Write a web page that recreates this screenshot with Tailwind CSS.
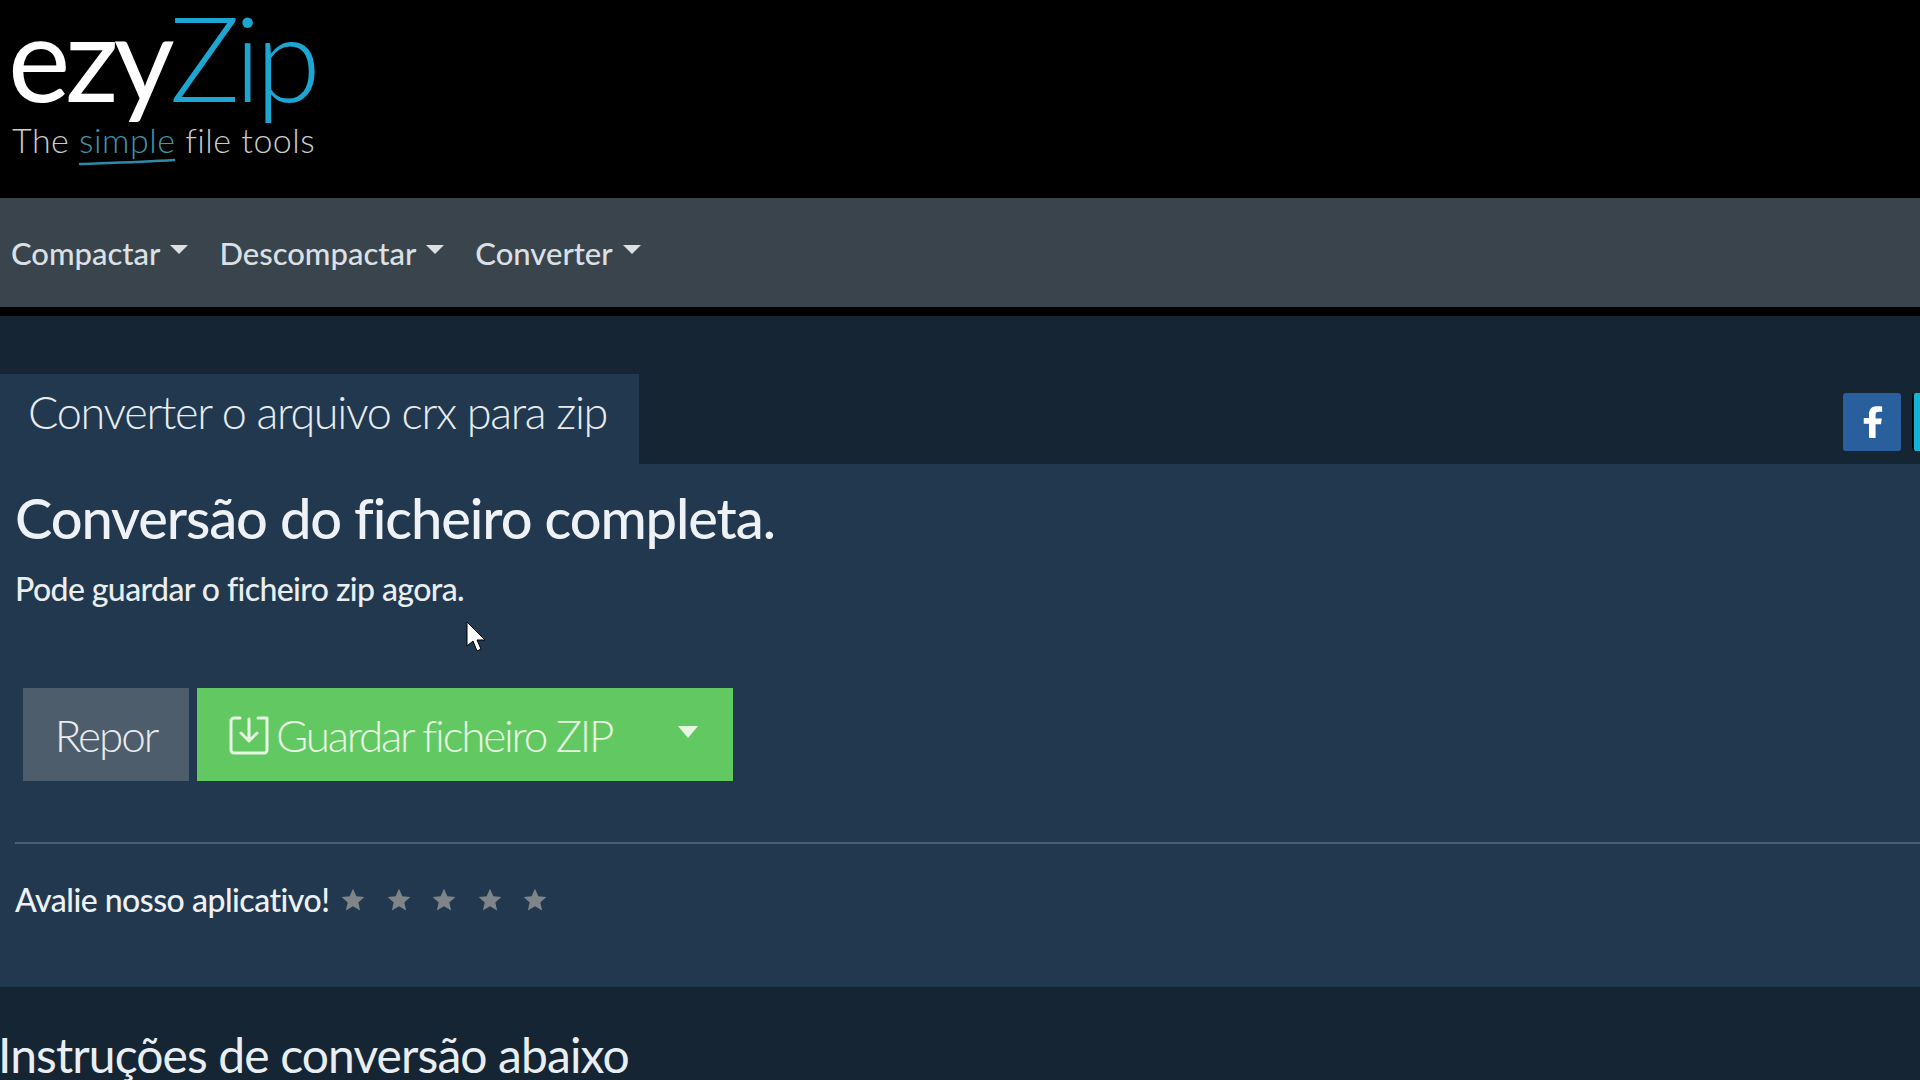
<!DOCTYPE html>
<html lang="pt">
<head>
<meta charset="utf-8">
<title>ezyZip</title>
<script src="https://cdn.jsdelivr.net/npm/@tailwindcss/browser@4"></script>
</head>
<body class="bg-[#152534] font-['Lato','Liberation_Sans',sans-serif]">
<div class="relative w-[1920px] h-[1080px] overflow-hidden">
  <header class="h-[198px] bg-black pl-[8px] pt-[1px]">
    <div class="flex -mt-[9px] items-start text-[118px] leading-[130px] tracking-[-5px]">
      <span class="text-white font-normal">ezy</span><span class="text-[#1ea6d3] font-light">Zip</span>
    </div>
    <div class="relative w-fit ml-[4px] mt-[3px] text-[34px] leading-[30px] font-light tracking-[0.5px] text-[#c9cbc9]">
      The <span class="text-[#3f95ab]">simple</span> file tools
      <svg class="absolute left-[66px] top-[32px]" width="98" height="10" viewBox="0 0 98 10" fill="none"><path d="M2 7C30 6 65 5 96 3" stroke="#2b8ba8" stroke-width="2.5" stroke-linecap="round"/></svg>
    </div>
  </header>

  <nav class="h-[109px] bg-[#3a444d] flex items-center pl-[11px] pt-[2px] gap-[31px] text-[31px] font-medium text-[#dbe0e5]">
    <a class="flex items-center gap-[10px]">Compactar<span class="w-0 h-0 -mt-[8px] border-x-[9px] border-x-transparent border-t-[9px] border-t-[#dbe0e5]"></span></a>
    <a class="flex items-center gap-[10px]">Descompactar<span class="w-0 h-0 -mt-[8px] border-x-[9px] border-x-transparent border-t-[9px] border-t-[#dbe0e5]"></span></a>
    <a class="flex items-center gap-[10px]">Converter<span class="w-0 h-0 -mt-[8px] border-x-[9px] border-x-transparent border-t-[9px] border-t-[#dbe0e5]"></span></a>
  </nav>
  <div class="h-[9px] bg-black"></div>

  <main class="pt-[58px]">
    <div class="flex justify-between h-[90px]">
      <div class="w-[639px] bg-[#22384e] pl-[28px] pt-[12px] text-[45px] leading-[52px] font-light tracking-[-1.3px] text-[#e6ecf0]">Converter o arquivo crx para zip</div>
      <div class="flex gap-[11px] pt-[19px] -mr-[50px]">
        <a class="w-[58px] h-[58px] rounded-[3px] bg-[#2a5f9e] flex items-center justify-center">
          <svg width="21" height="32" viewBox="0 0 24 36"><path d="M8 36V20H2v-6.500h6V9c0-6 3.500-9 9-9 2.500 0 4.500.2 6 .4v6h-3.500c-3 0-4 1.300-4 3.600v4h7.200l-1 6.500h-6.200v16z" fill="#fff"/></svg>
        </a>
        <a class="w-[58px] h-[58px] rounded-[3px] bg-[#12b5d6] border-l-2 border-black"></a>
      </div>
    </div>

    <section class="h-[523px] bg-[#22384e] px-[15px] pt-[23px]">
      <h1 class="text-[56px] leading-[62px] font-medium tracking-[-1.1px] text-[#eef1f5]">Conversão do ficheiro completa.</h1>
      <p class="mt-[22px] text-[32px] leading-[36px] font-medium tracking-[-0.6px] text-[#e9eef0]">Pode guardar o ficheiro zip agora.</p>
      <div class="flex gap-[8px] mt-[81px] ml-[8px]">
        <button class="w-[166px] h-[93px] bg-[#4e5d6c] text-[44px] font-light tracking-[-2px] text-[#e8ecef]">Repor</button>
        <button class="w-[536px] h-[93px] bg-[#62c962] flex items-center pl-[32px] text-[44px] font-light tracking-[-2.200px] text-[#e6f6e2]">
          <svg class="shrink-0" width="40" height="40" viewBox="0 0 40 40" fill="none" stroke="#e6f6e2" stroke-width="3" stroke-linejoin="round" stroke-linecap="round"><path d="M11 3H5a3 3 0 0 0-3 3v29a3 3 0 0 0 3 3h30a3 3 0 0 0 3-3V3H29"/><path d="M20 4v21M12 18l8 8 8-8"/></svg>
          <span class="ml-[7px]">Guardar ficheiro ZIP</span>
          <span class="ml-[66px] -mt-[5px] w-0 h-0 border-x-[10px] border-x-transparent border-t-[12px] border-t-[#e6f6e2]"></span>
        </button>
      </div>
      <hr class="mt-[61px] -mr-[15px] border-t-2 border-[#48617a]">
      <div class="flex items-center mt-[38px] h-[36px]">
        <span class="text-[32px] font-medium tracking-[-0.5px] text-[#eef1f5] w-[325px] shrink-0">Avalie nosso aplicativo!</span>
        <div class="flex gap-[19.500px] text-[#7f8488]">
          <svg width="26" height="26" viewBox="0 0 24 24" fill="currentColor"><path d="M12 1.500l3.100 7.100 7.400.6-5.600 5 1.700 7.600L12 17.800l-6.600 4 1.700-7.600-5.600-5 7.400-.6z"/></svg>
          <svg width="26" height="26" viewBox="0 0 24 24" fill="currentColor"><path d="M12 1.500l3.100 7.100 7.400.6-5.600 5 1.700 7.600L12 17.800l-6.600 4 1.700-7.600-5.600-5 7.400-.6z"/></svg>
          <svg width="26" height="26" viewBox="0 0 24 24" fill="currentColor"><path d="M12 1.500l3.100 7.100 7.400.6-5.600 5 1.700 7.600L12 17.800l-6.600 4 1.700-7.600-5.600-5 7.400-.6z"/></svg>
          <svg width="26" height="26" viewBox="0 0 24 24" fill="currentColor"><path d="M12 1.500l3.100 7.100 7.400.6-5.600 5 1.700 7.600L12 17.800l-6.600 4 1.700-7.600-5.600-5 7.400-.6z"/></svg>
          <svg width="26" height="26" viewBox="0 0 24 24" fill="currentColor"><path d="M12 1.500l3.100 7.100 7.400.6-5.600 5 1.700 7.600L12 17.800l-6.600 4 1.700-7.600-5.600-5 7.400-.6z"/></svg>
        </div>
      </div>
    </section>

    <h2 class="mt-[41px] text-[48px] leading-[54px] tracking-[-0.9px] text-[#e9eef2] -ml-[2px]">Instruções de conversão abaixo</h2>
  </main>

  <svg class="absolute left-[465px] top-[621px]" width="22" height="31" viewBox="0 0 22 31"><path d="M2 1v24l6-5 4 10 4-2-4-9h8z" fill="#fff" stroke="#000" stroke-width="1"/></svg>
</div>
</body>
</html>
